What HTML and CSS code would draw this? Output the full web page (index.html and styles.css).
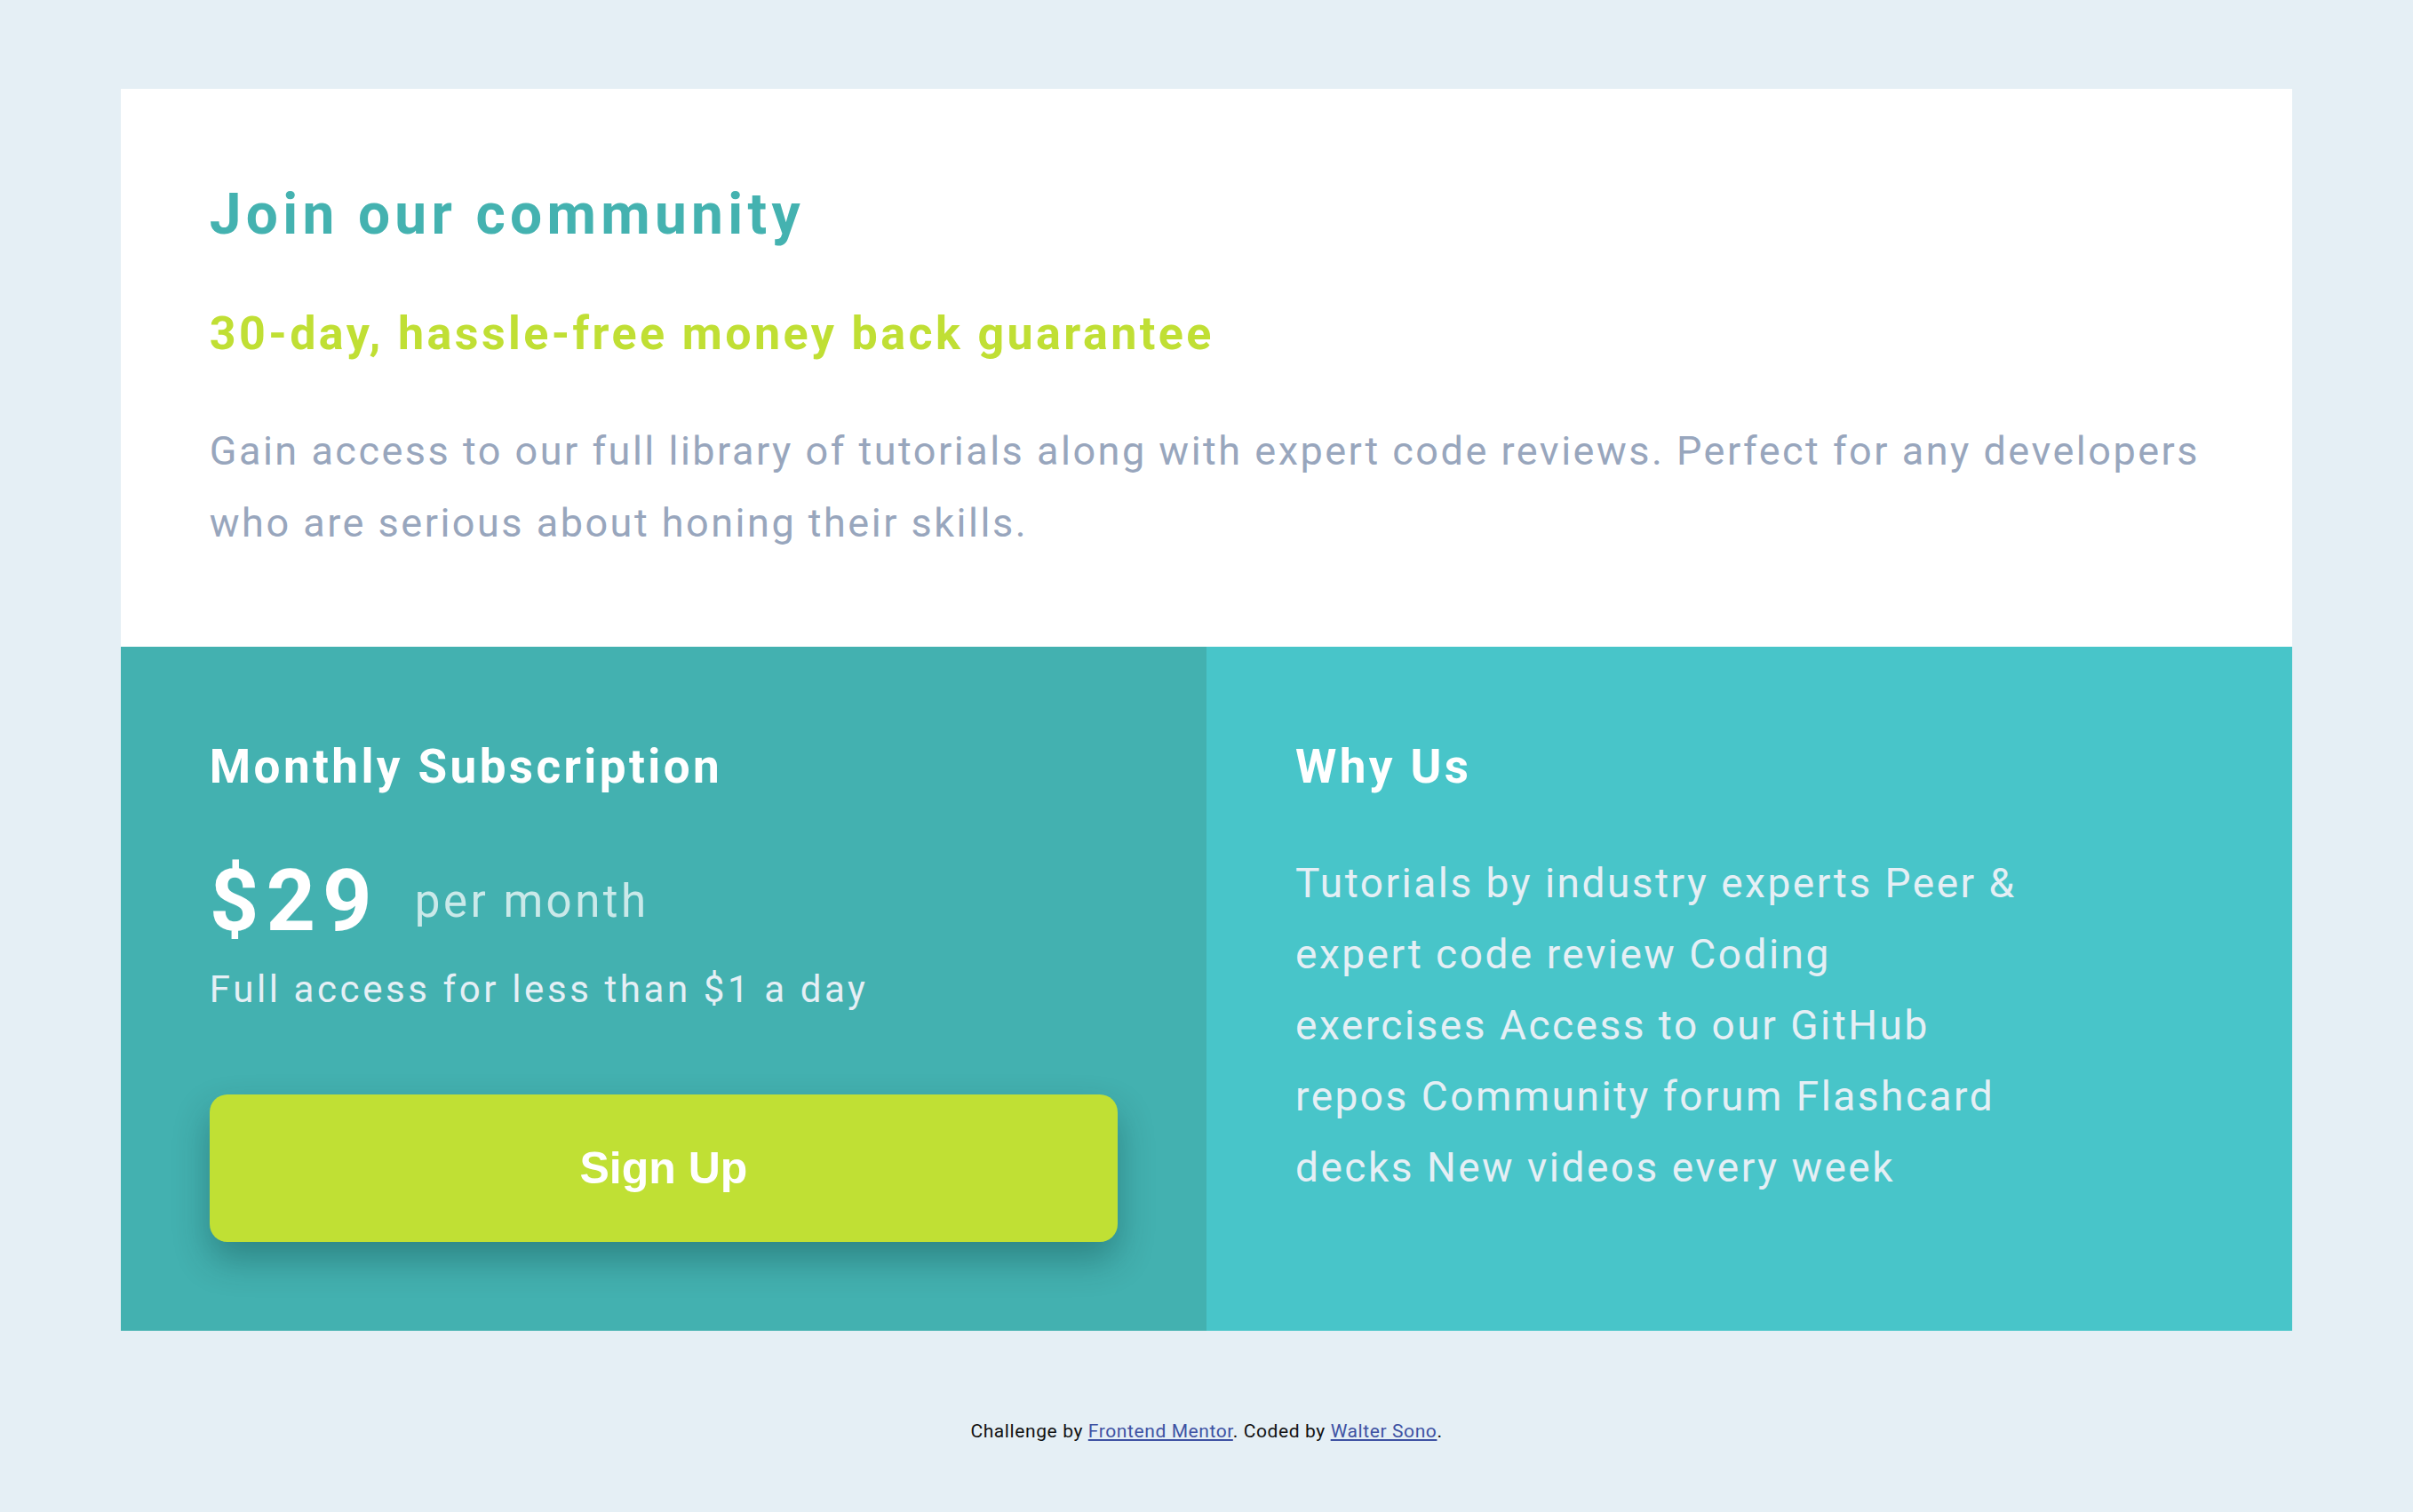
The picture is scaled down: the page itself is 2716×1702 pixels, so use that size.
FILE: index.html
```html
<!DOCTYPE html>
<html lang="en">
<head>
<meta charset="utf-8">
<title>Single price grid component</title>
<link rel="stylesheet" href="styles.css">
</head>
<body>
<main class="card">
  <section class="intro">
    <h1 class="intro-title">Join our community</h1>
    <h2 class="intro-sub">30-day, hassle-free money back guarantee</h2>
    <p class="intro-text">Gain access to our full library of tutorials along with expert code reviews. Perfect for any developers who are serious about honing their skills.</p>
  </section>
  <section class="plans">
    <div class="plan">
      <h3 class="col-title">Monthly Subscription</h3>
      <div class="price-row">
        <span class="price">$29</span>
        <span class="per">per month</span>
      </div>
      <p class="price-note">Full access for less than $1 a day</p>
      <button class="signup" type="button">Sign Up</button>
    </div>
    <div class="why">
      <h3 class="col-title">Why Us</h3>
      <ul class="why-list">
        <li>Tutorials by industry experts</li>
        <li>Peer &amp; expert code review</li>
        <li>Coding exercises</li>
        <li>Access to our GitHub repos</li>
        <li>Community forum</li>
        <li>Flashcard decks</li>
        <li>New videos every week</li>
      </ul>
    </div>
  </section>
</main>
<footer class="attribution">
  Challenge by <a href="#">Frontend Mentor</a>. Coded by <a href="#">Walter Sono</a>.
</footer>
</body>
</html>
```
FILE: styles.css
```css
* { box-sizing: border-box; }

html, body {
  margin: 0;
  padding: 0;
}

body {
  background: #e5eff5;
  font-family: Roboto, "Liberation Sans", Arial, sans-serif;
  padding-top: 100px;
  min-height: 1702px;
}

.card {
  width: 90%;
  margin: 0 auto;
  display: flex;
  flex-direction: column;
}

.intro {
  background: #ffffff;
  padding: 102px 60px 99px 100px;
}

.intro-title {
  margin: 0;
  font-size: 64px;
  line-height: 80px;
  font-weight: 700;
  color: #44b2b0;
  letter-spacing: 5.3px;
}

.intro-sub {
  margin: 62px 0 0 0;
  font-size: 52px;
  line-height: 64px;
  font-weight: 700;
  color: #c0df34;
  letter-spacing: 3.4px;
}

.intro-text {
  margin: 59px 0 0 0;
  font-size: 45px;
  line-height: 81px;
  color: #98a6bd;
  letter-spacing: 2.5px;
}

.plans {
  display: grid;
  grid-template-columns: 1fr 1fr;
}

.plan {
  background: #43b1b0;
  padding: 103px 100px 100px 100px;
  display: flex;
  flex-direction: column;
}

.why {
  background: #48c5c9;
  padding: 103px 100px 100px 100px;
}

.col-title {
  margin: 0;
  font-size: 53px;
  line-height: 64px;
  font-weight: 700;
  color: #ffffff;
  letter-spacing: 3.4px;
}

.price-row {
  margin-top: 69px;
  display: flex;
  align-items: flex-end;
  gap: 40px;
}

.price {
  font-size: 97px;
  line-height: 100px;
  font-weight: 700;
  color: #ffffff;
  letter-spacing: 8px;
}

.per {
  font-size: 51px;
  line-height: 60px;
  margin-bottom: 19px;
  color: rgba(255, 255, 255, 0.72);
  letter-spacing: 3.5px;
}

.price-note {
  margin: 22px 0 0 0;
  font-size: 42px;
  line-height: 56px;
  color: #e5eff5;
  letter-spacing: 3.6px;
}

.signup {
  margin-top: 90px;
  height: 166px;
  width: 100%;
  border: none;
  border-radius: 20px;
  background: #c0e034;
  color: #ffffff;
  font-family: "Liberation Sans", Arial, sans-serif;
  font-weight: 700;
  font-size: 50px;
  box-shadow: 0 20px 40px rgba(0, 40, 40, 0.32);
  cursor: pointer;
  display: flex;
  align-items: center;
  justify-content: center;
}

.why-list {
  margin: 59px 0 0 0;
  padding: 0;
  list-style: none;
  max-width: 818px;
  font-size: 46px;
  line-height: 80px;
  color: #e5eff5;
  letter-spacing: 2.5px;
}

.why-list li {
  display: inline;
}

.attribution {
  margin-top: 99px;
  text-align: center;
  font-size: 21px;
  line-height: 28px;
  color: #111111;
  letter-spacing: 0.6px;
}

.attribution a {
  color: #3e52a3;
}
```
